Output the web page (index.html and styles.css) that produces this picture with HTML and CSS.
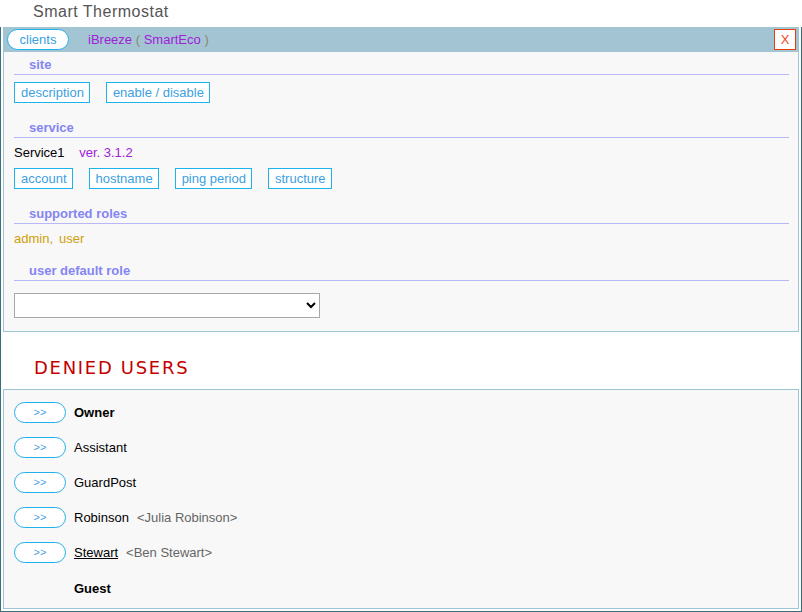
FILE: index.html
```html
<!DOCTYPE html>
<html>
<head>
<meta charset="utf-8">
<link rel="stylesheet" href="styles.css">
</head>
<body>
<div class="app-title">Smart Thermostat</div>
<div class="frame">
  <div class="panel">
    <div class="panel-head">
      <button class="pill pill-clients">clients</button>
      <span class="client-name"><span class="purple">iBreeze</span> <span class="paren">(</span> <span class="purple">SmartEco</span> <span class="paren">)</span></span>
      <button class="close-btn">X</button>
    </div>
    <div class="panel-body">
      <div class="sec-title first">site</div>
      <div class="btn-row first">
        <button class="box-btn">description</button>
        <button class="box-btn">enable / disable</button>
      </div>
      <div class="sec-title">service</div>
      <div class="info-line">Service1 <span class="purple ver">ver. 3.1.2</span></div>
      <div class="btn-row">
        <button class="box-btn">account</button>
        <button class="box-btn">hostname</button>
        <button class="box-btn">ping period</button>
        <button class="box-btn">structure</button>
      </div>
      <div class="sec-title">supported roles</div>
      <div class="info-line roles"><span>admin,</span><span>user</span></div>
      <div class="sec-title">user default role</div>
      <select class="role-select"><option></option></select>
    </div>
  </div>
  <h2 class="denied-title">DENIED USERS</h2>
  <div class="panel users">
    <div class="user-row"><button class="pill arrow">&gt;&gt;</button><span class="uname bold">Owner</span></div>
    <div class="user-row"><button class="pill arrow">&gt;&gt;</button><span class="uname">Assistant</span></div>
    <div class="user-row"><button class="pill arrow">&gt;&gt;</button><span class="uname">GuardPost</span></div>
    <div class="user-row"><button class="pill arrow">&gt;&gt;</button><span class="uname">Robinson</span><span class="full">&lt;Julia Robinson&gt;</span></div>
    <div class="user-row"><button class="pill arrow">&gt;&gt;</button><span class="uname link">Stewart</span><span class="full">&lt;Ben Stewart&gt;</span></div>
    <div class="user-row last"><span class="spacer"></span><span class="uname bold">Guest</span></div>
  </div>
</div>
</body>
</html>
```

FILE: styles.css
```css
* { box-sizing: border-box; }
html, body { margin: 0; padding: 0; background: #fff; }
body {
  font-family: "Liberation Sans", Arial, sans-serif;
  font-size: 13px;
  color: #000;
  width: 802px;
  height: 612px;
  overflow: hidden;
}
.app-title {
  height: 27px;
  padding-left: 33px;
  font-size: 16px;
  letter-spacing: 0.5px;
  line-height: 24px;
  color: #555;
}
.frame {
  height: 585px;
  border: 1px solid #3b6e7b;
  border-top: none;
  padding: 0 2px 2px 2px;
}
.panel {
  background: #f8f8f8;
  border: 1px solid #9fc5d4;
  border-top: none;
}
.panel-head {
  height: 25px;
  background: #a3c5d3;
  display: flex;
  align-items: center;
  padding: 0 2px 0 3px;
}
button {
  font-family: inherit;
  font-size: 13px;
  margin: 0;
  cursor: pointer;
}
.pill {
  background: #fff;
  border: 1px solid #22b0ea;
  border-radius: 11px;
  color: #3a9fe0;
  height: 21px;
  padding: 0;
}
.pill-clients { width: 62px; line-height: 19px; }
.client-name { margin-left: 19px; }
.purple { color: #a020d8; }
.paren { color: #8a8870; }
.close-btn {
  margin-left: auto;
  width: 22px;
  height: 21px;
  background: #fff;
  border: 1px solid #e2400e;
  color: #f04a20;
  padding: 0;
  font-size: 13px;
}
.panel-body {
  padding: 0 9px 13px 10px;
}
.sec-title {
  margin-top: 16px;
  padding-left: 15px;
  padding-top: 1px;
  padding-bottom: 1px;
  line-height: 16px;
  font-weight: bold;
  color: #8585f2;
  border-bottom: 1px solid #b8b8f6;
}
.sec-title.first { margin-top: 4px; }
.btn-row {
  display: flex;
  gap: 16px;
  margin-top: 8px;
}
.btn-row.first { margin-top: 7px; }
.box-btn {
  background: #fff;
  border: 1px solid #1cb4ea;
  color: #3d9fe0;
  padding: 0 5px 0 6px;
  height: 21px;
  line-height: 19px;
}
.info-line {
  margin-top: 7px;
  line-height: 15px;
}
.ver { margin-left: 11px; }
.roles { color: #cf9f0a; display: flex; gap: 6px; }
.role-select {
  display: block;
  margin-top: 12px;
  width: 306px;
  height: 25px;
  background: #fff;
  border: 1px solid #a8a8a8;
  font-family: inherit;
  font-size: 13px;
}
.denied-title {
  margin: 0;
  height: 57px;
  padding: 25px 0 0 31px;
  font-family: "DejaVu Sans", Verdana, sans-serif;
  font-weight: normal;
  font-size: 18px;
  line-height: 22px;
  letter-spacing: 1.7px;
  color: #c40000;
}
.panel.users {
  border-top: 1px solid #9fc5d4;
  padding: 5px 10px 3px 10px;
  height: 220px;
}
.user-row {
  display: flex;
  align-items: center;
  height: 35px;
}
.user-row.last { margin-top: 1px; }
.arrow {
  width: 52px;
  font-size: 11px;
  color: #4aa0e0;
  line-height: 19px;
}
.spacer { width: 52px; }
.uname { margin-left: 8px; }
.bold { font-weight: bold; }
.link { text-decoration: underline; }
.full { margin-left: 8px; color: #666; }
```
